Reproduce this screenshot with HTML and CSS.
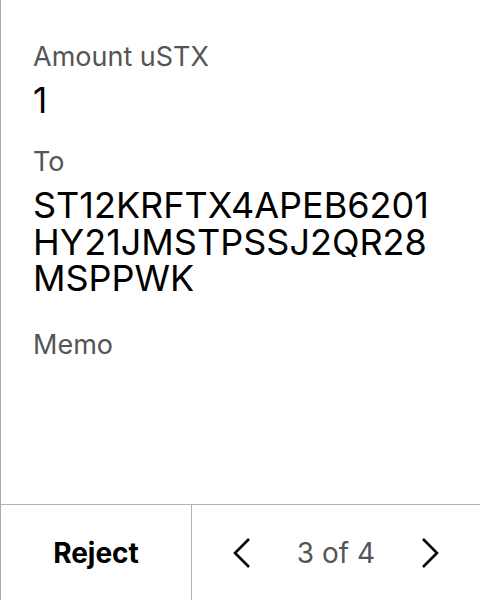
FILE: index.html
```html
<!DOCTYPE html>
<html>
<head>
<meta charset="utf-8">
<link rel="stylesheet" href="styles.css">
</head>
<body>
<div class="screen">
  <div class="content">
    <div class="field">
      <div class="label">Amount uSTX</div>
      <div class="value amount">1</div>
    </div>
    <div class="field">
      <div class="label">To</div>
      <div class="value address">ST12KRFTX4APEB6201 HY21JMSTPSSJ2QR28 MSPPWK</div>
    </div>
    <div class="field memo">
      <div class="label">Memo</div>
    </div>
  </div>
  <div class="footer">
    <div class="reject">Reject</div>
    <div class="pager">
      <svg class="chev" width="18" height="32" viewBox="0 0 18 32"><path d="M16 2 L2 16 L16 30" fill="none" stroke="#000" stroke-width="2.6"/></svg>
      <span class="count">3 of 4</span>
      <svg class="chev" width="18" height="32" viewBox="0 0 18 32"><path d="M2 2 L16 16 L2 30" fill="none" stroke="#000" stroke-width="2.6"/></svg>
    </div>
  </div>
</div>
</body>
</html>
```
FILE: styles.css
```css
* { box-sizing: border-box; }
html, body { margin: 0; padding: 0; background: #fff; }
body { font-family: Inter, "Noto Sans", sans-serif; color: #000; }
.screen {
  width: 480px;
  height: 600px;
  display: flex;
  flex-direction: column;
  border-left: 1px solid #a8a8a8;
}
.content {
  flex: 1;
  padding: 43px 32px 0 32px;
  display: flex;
  flex-direction: column;
  gap: 30px;
}
.label {
  font-size: 27px;
  line-height: 28px;
  color: #555;
}
.value {
  margin-top: 11px;
  color: #000;
}
.amount { font-size: 35px; line-height: 36px; }
.address {
  font-size: 36px;
  line-height: 36.65px;
  width: 440px;
}
.memo { margin-top: 4px; }
.footer {
  height: 96px;
  border-top: 1px solid #b4b4b4;
  display: flex;
}
.reject {
  width: 191px;
  border-right: 1px solid #b4b4b4;
  display: flex;
  align-items: center;
  justify-content: center;
  font-size: 28px;
  font-weight: 700;
}
.pager {
  flex: 1;
  display: flex;
  align-items: center;
  justify-content: center;
  gap: 46px;
}
.count { font-size: 28px; color: #555; }
.chev { display: block; }
```
